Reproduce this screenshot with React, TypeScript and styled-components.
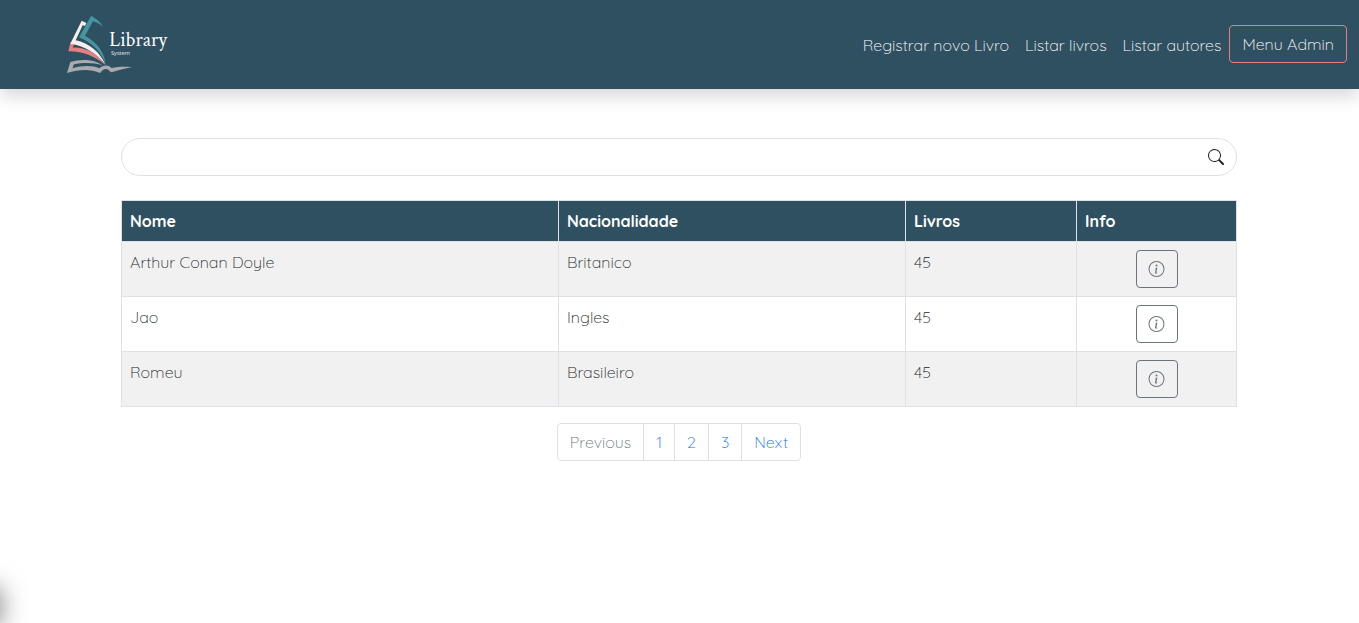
import React from "react";
import styled, { createGlobalStyle } from "styled-components";
import { BsInfoCircle, BsSearch } from "react-icons/bs";

const GlobalStyle = createGlobalStyle`
  *, *::before, *::after { box-sizing: border-box; }
  body {
    margin: 0;
    min-height: 100vh;
    overflow: hidden;
    background: #fff;
    color: #212529;
    font: 300 16px/24px Quicksand, Lato, sans-serif;
  }
`;

const Navbar = styled.nav`
  display: flex;
  align-items: center;
  justify-content: space-between;
  height: 89px;
  padding: 0 12px 0 50px;
  background: #2f5061;
  box-shadow: 0 8px 16px rgba(0, 0, 0, 0.15);
`;

const NavLinks = styled.div`
  display: flex;
  align-items: center;
  padding-bottom: 2px;
`;

const NavLink = styled.a`
  padding: 9px 8px 7px;
  color: #fff;
  text-decoration: none;
  white-space: nowrap;
`;

const AdminButton = styled.button`
  height: 38px;
  padding: 0 12px;
  border: 1px solid #e57f84;
  border-radius: 4px;
  background: transparent;
  color: #fff;
  font: inherit;
  white-space: nowrap;
`;

const Main = styled.main`
  display: flex;
  flex-direction: column;
  align-items: center;
  width: 1116px;
  margin: 49px 0 0 121px;
`;

const SearchBox = styled.div`
  display: flex;
  align-items: center;
  width: 100%;
  height: 38px;
  padding-right: 12px;
  border: 1px solid #dee2e6;
  border-radius: 19px;
`;

const SearchInput = styled.input`
  flex: 1;
  height: 100%;
  margin-left: 16px;
  border: 0;
  outline: 0;
  background: transparent;
  font: inherit;
`;

const SearchIcon = styled(BsSearch)`
  width: 16px;
  height: 16px;
`;

const Table = styled.table`
  width: 1115px;
  margin: 24px 0 16px;
  border-collapse: collapse;
  table-layout: fixed;
`;

const Column = styled.col<{ $width: number }>`
  width: ${({ $width }) => $width}px;
`;

const HeadCell = styled.th`
  height: 41px;
  padding: 8px;
  border: 1px solid #dee2e6;
  background: #2f5061;
  color: #fff;
  font-weight: 700;
  text-align: left;
`;

const Row = styled.tr`
  height: 55px;
  &:nth-child(odd) { background: #f1f1f1; }
`;

const Cell = styled.td<{ $center?: boolean }>`
  padding: 8px;
  border: 1px solid #dee2e6;
  text-align: ${({ $center }) => ($center ? "center" : "left")};
  vertical-align: top;
`;

const InfoButton = styled.button`
  display: flex;
  align-items: center;
  justify-content: center;
  width: 42px;
  height: 38px;
  margin: 0 auto;
  padding: 0 1px 0 0;
  border: 1px solid #6c757d;
  border-radius: 4px;
  background: transparent;
  color: #6c757d;
`;

const InfoIcon = styled(BsInfoCircle)`
  width: 17px;
  height: 16px;
`;

const Pagination = styled.div`
  display: flex;
  height: 38px;
  border: 1px solid #dee2e6;
  border-radius: 4px;
`;

const PageLink = styled.a<{ $disabled?: boolean }>`
  padding: 6px 12px;
  color: ${({ $disabled }) => ($disabled ? "#6c757d" : "#0d6efd")};
  text-decoration: none;
  & + & { border-left: 1px solid #dee2e6; }
`;

const CornerShadow = styled.div`
  position: fixed;
  bottom: -3px;
  left: -42px;
  width: 42px;
  height: 38px;
  border-radius: 4px;
  box-shadow: 0 0 26px rgba(0, 0, 0, 0.52);
`;

const Logo = () => (
  <svg width="140" height="89" viewBox="0 0 420 267" role="img" aria-label="Library System">
    <path fill="#a9abae" d="M61 186C91 177 132 176 157 196C133 187 98 187 72 193L67 205C96 196 130 196 148 205C158 195 173 192 185 204C202 200 224 199 246 201C222 206 204 211 183 217C171 201 161 205 150 219C124 207 88 207 51 219Z" />
    <path fill="#e57f84" d="M62 126L73 131L68 143C107 141 145 163 164 194C135 168 95 153 55 154Z" />
    <path fill="#f6efed" d="M95 62L109 69L105 78L98 76L77 121C117 128 152 159 166 194C140 159 103 137 61 131Z" />
    <path fill="#4297a0" d="M124 47C139 56 153 67 160 81C151 73 141 67 129 64L105 107C142 128 165 158 167 194C155 158 129 129 87 112Z" />
    <text x="178" y="138" fill="#fff" fontFamily="'Crimson Text','Liberation Serif',serif" fontSize="61" fontWeight="400" textLength="173" lengthAdjust="spacingAndGlyphs">Library</text>
    <text x="183" y="164" fill="#e4e9eb" fontFamily="'Open Sans',sans-serif" fontSize="16" fontWeight="500" textLength="57" lengthAdjust="spacingAndGlyphs">System</text>
  </svg>
);

const links = ["Registrar novo Livro", "Listar livros", "Listar autores"];

const authors = [
  { name: "Arthur Conan Doyle", nation: "Britanico", books: 45 },
  { name: "Jao", nation: "Ingles", books: 45 },
  { name: "Romeu", nation: "Brasileiro", books: 45 },
];

const pages = ["Previous", "1", "2", "3", "Next"];

export default function App() {
  return (
    <>
      <GlobalStyle />
      <Navbar>
        <Logo />
        <NavLinks>
          {links.map((link) => (
            <NavLink key={link}>{link}</NavLink>
          ))}
          <AdminButton>Menu Admin</AdminButton>
        </NavLinks>
      </Navbar>
      <Main>
        <SearchBox>
          <SearchInput aria-label="Pesquisar" />
          <SearchIcon />
        </SearchBox>
        <Table>
          <colgroup>
            <Column $width={437} />
            <Column $width={347} />
            <Column $width={171} />
            <Column $width={160} />
          </colgroup>
          <thead>
            <tr>
              <HeadCell>Nome</HeadCell>
              <HeadCell>Nacionalidade</HeadCell>
              <HeadCell>Livros</HeadCell>
              <HeadCell>Info</HeadCell>
            </tr>
          </thead>
          <tbody>
            {authors.map((author) => (
              <Row key={author.name}>
                <Cell>{author.name}</Cell>
                <Cell>{author.nation}</Cell>
                <Cell>{author.books}</Cell>
                <Cell $center>
                  <InfoButton aria-label="Info"><InfoIcon /></InfoButton>
                </Cell>
              </Row>
            ))}
          </tbody>
        </Table>
        <Pagination>
          {pages.map((page) => (
            <PageLink key={page} $disabled={page === "Previous"}>{page}</PageLink>
          ))}
        </Pagination>
      </Main>
      <CornerShadow />
    </>
  );
}
